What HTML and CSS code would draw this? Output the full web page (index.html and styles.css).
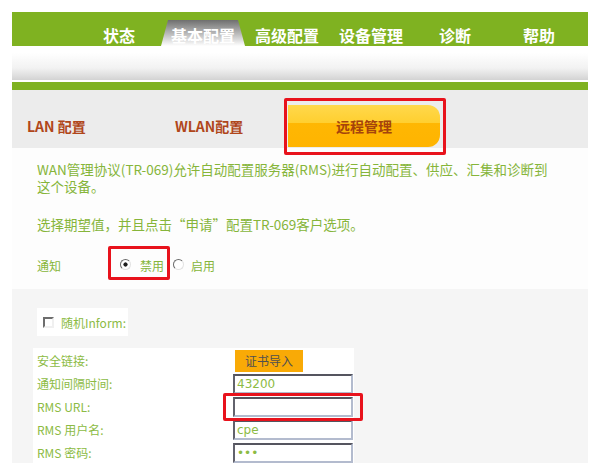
FILE: index.html
```html
<!DOCTYPE html>
<html lang="zh-CN">
<head>
    <meta charset="UTF-8">
    <title>远程管理</title>
    <link rel="stylesheet" href="styles.css">
</head>
<body>
    <div class="page">
        <div class="topnav">
            <a class="tab">状态</a>
            <a class="tab active">基本配置</a>
            <a class="tab">高级配置</a>
            <a class="tab">设备管理</a>
            <a class="tab">诊断</a>
            <a class="tab">帮助</a>
        </div>
        <div class="subbar"></div>
        <div class="greenline"></div>
        <div class="subnav">
            <a class="subtab lan">LAN 配置</a>
            <a class="subtab wlan">WLAN配置</a>
            <a class="subtab current">远程管理</a>
        </div>

        <div class="content">
            <p class="intro">WAN管理协议(TR-069)允许自动配置服务器(RMS)进行自动配置、供应、汇集和诊断到<br>这个设备。</p>
            <p class="intro hint">选择期望值，并且点击“申请”配置TR-069客户选项。</p>
            <div class="notify-row">
                <span class="notify-label">通知</span>
                <label class="choice"><input type="radio" name="inform" checked>禁用</label>
                <label class="choice"><input type="radio" name="inform">启用</label>
            </div>
        </div>

        <div class="panel">
            <label class="random"><input type="checkbox">随机Inform:</label>
            <div class="form">
                <div class="row"><span class="label">安全链接:</span><button class="cert">证书导入</button></div>
                <div class="row"><span class="label">通知间隔时间:</span><input class="field" type="text" value="43200"></div>
                <div class="row"><span class="label">RMS URL:</span><input class="field" type="text" value=""></div>
                <div class="row"><span class="label">RMS 用户名:</span><input class="field" type="text" value="cpe"></div>
                <div class="row"><span class="label">RMS 密码:</span><input class="field" type="password" value="abc"></div>
            </div>
        </div>

        <!-- red annotation boxes -->
        <span class="mark mark-tab"></span>
        <span class="mark mark-radio"></span>
        <span class="mark mark-url"></span>
    </div>
</body>
</html>
```

FILE: styles.css
```css
html, body {
    margin: 0;
    overflow: hidden;
    background: #ffffff;
}
body {
    font-family: "Noto Sans CJK SC", "Noto Sans", sans-serif;
    font-size: 12px;
}
.page {
    position: relative;
    width: 576px;
    margin: 12px 0 0 12px;
}
.topnav {
    display: flex;
    align-items: flex-end;
    height: 34px;
    padding-left: 65px;
    background-color: #7fb221;
}
.tab {
    width: 84px;
    height: 26px;
    box-sizing: border-box;
    padding-top: 6px;
    line-height: 19px;
    text-align: center;
    font-size: 16px;
    font-weight: bold;
    color: #ffffff;
}
.tab.active {
    background: linear-gradient(#6f6f6f, #bdbdbd 55%, #ffffff);
    clip-path: polygon(7px 0, calc(100% - 7px) 0, 100% 100%, 0 100%);
    border-radius: 4px 4px 0 0;
}
.subbar {
    height: 34px;
    background: linear-gradient(#ffffff 20%, #f2f2f2 65%, #d3d3d3);
    border-bottom: 2px solid #ffffff;
}
.greenline {
    height: 8px;
    background-color: #7fb221;
}
.subnav {
    display: flex;
    align-items: flex-end;
    height: 58px;
    padding-left: 15px;
    background-color: #ececec;
}
.subtab {
    height: 42px;
    margin-bottom: 1px;
    line-height: 42px;
    font-size: 14px;
    font-weight: bold;
    color: #b0461a;
}
.subtab.lan {
    width: 148px;
}
.subtab.wlan {
    width: 113px;
}
.subtab.current {
    width: 152px;
    text-align: center;
    color: #a5430c;
    border-radius: 0 12px 12px 0;
    background: linear-gradient(#ffd84c 0, #ffcf30 42%, #ffb703 42%, #ffb400 100%);
}
.content {
    padding: 13px 0 13px 25px;
    background-color: #fdfdfd;
}
.intro {
    margin: 0;
    font-size: 13.5px;
    line-height: 17px;
    color: #86b53a;
}
.intro.hint {
    margin-top: 21px;
}
.notify-row {
    display: flex;
    align-items: center;
    height: 22px;
    margin-top: 21px;
    color: #86b53a;
}
.notify-label {
    width: 83px;
}
.choice {
    display: flex;
    align-items: center;
}
.choice input {
    margin: 0 9px 2px 0;
}
.choice + .choice input {
    margin-left: 9px;
    margin-right: 7px;
}
input[type="radio"] {
    appearance: none;
    width: 11px;
    height: 11px;
    border: 1px solid;
    border-color: #6a6a6a #e2e2e2 #e2e2e2 #6a6a6a;
    border-radius: 50%;
    background: #ffffff;
}
input[type="radio"]:checked {
    background: radial-gradient(circle, #1e1e1e 0 1.8px, #ffffff 2.4px);
}
.panel {
    height: 200px;
    padding-top: 19px;
    background-color: #f5f5f5;
}
.random {
    display: flex;
    align-items: center;
    width: 91px;
    height: 28px;
    margin-left: 25px;
    background-color: #ffffff;
    color: #8cbb44;
}
.random input {
    appearance: none;
    width: 11px;
    height: 11px;
    margin: 0 7px 0 6px;
    border: 2px solid;
    border-color: #6e6e6e #f0f0f0 #f0f0f0 #6e6e6e;
    background: #ffffff;
    box-sizing: border-box;
}
.form {
    width: 321px;
    margin: 12px 0 0 21px;
    padding-top: 1px;
    background-color: #ffffff;
}
.row {
    display: flex;
    align-items: center;
    height: 23px;
    padding-left: 4px;
    color: #8cbb44;
}
.label {
    width: 196px;
}
.cert {
    width: 68px;
    height: 22px;
    margin-left: 2px;
    border: none;
    padding: 0;
    background-color: #f9aa06;
    font-family: inherit;
    font-size: 12px;
    color: #505050;
}
.field {
    width: 120px;
    height: 20px;
    box-sizing: border-box;
    padding: 0 2px;
    border: 2px solid;
    border-color: #55555f #b3bbce #b3bbce #62626c;
    background: #ffffff;
    font-family: "DejaVu Sans", sans-serif;
    font-size: 12px;
    line-height: 14px;
    color: #8cbb44;
    outline: none;
}
.mark {
    position: absolute;
    box-sizing: border-box;
    border: 3px solid #e8121c;
    border-radius: 2px;
}
.mark-tab {
    left: 272px;
    top: 86px;
    width: 162px;
    height: 57px;
}
.mark-radio {
    left: 96px;
    top: 234px;
    width: 62px;
    height: 34px;
}
.mark-url {
    left: 211px;
    top: 381px;
    width: 140px;
    height: 28px;
}
```
